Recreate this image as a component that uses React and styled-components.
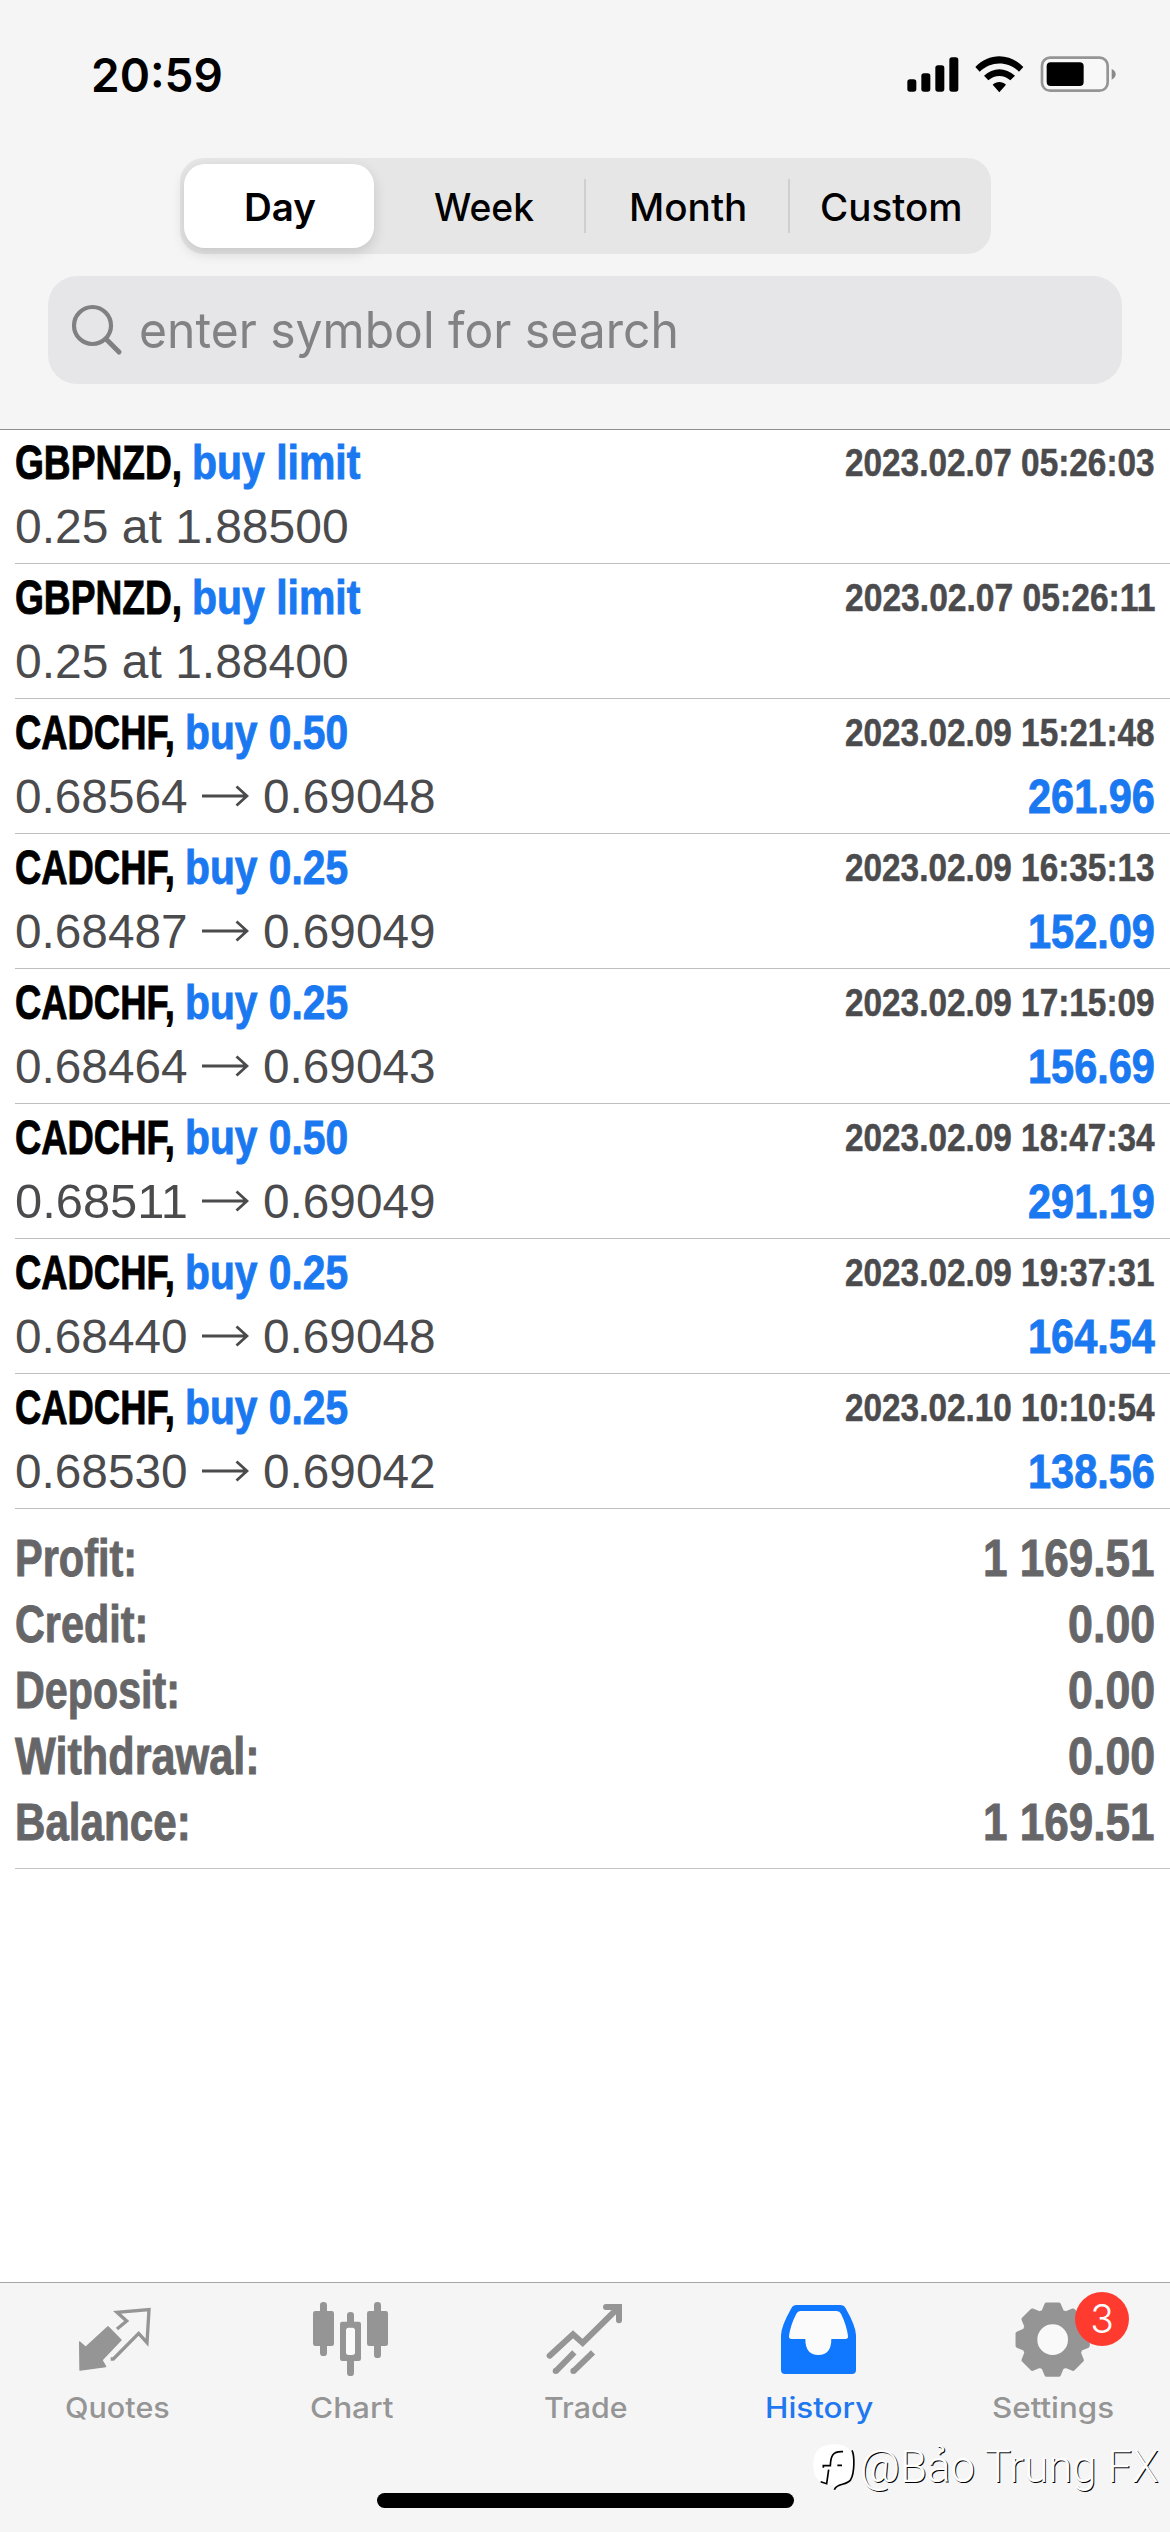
import React, { useLayoutEffect, useRef, useState } from 'react'
import styled, { createGlobalStyle } from 'styled-components';

const GlobalStyle = createGlobalStyle`
    body {
        margin: 0;
        background: #fff;
        font-family: "Inter", sans-serif;
        color: #000;
    }
    * {
        box-sizing: border-box;
    }
    svg {
        display: block;
        flex: none;
    }
`;

const Screen = styled.div`
    width: 1170px;
    height: 2532px;
    display: flex;
    flex-direction: column;
    background: #fff;
    overflow: hidden;
`;

const Header = styled.header`
    height: 430px;
    flex: none;
    background: #f5f5f5;
    border-bottom: 1px solid #8e8e90;
`;

const StatusBar = styled.div`
    height: 158px;
    padding: 0 54px 9px 91px;
    display: flex;
    align-items: center;
    justify-content: space-between;
`;

const Clock = styled.div`
    font-size: 47px;
    font-weight: 600;
    line-height: 60px;
`;

const StatusIcons = styled.div`
    display: flex;
    align-items: center;
    gap: 16px;
`;

const Segments = styled.div`
    width: 811px;
    height: 96px;
    margin: 0 0 0 180px;
    padding: 6px 0 6px 4px;
    border-radius: 24px;
    background: #e6e6e6;
    display: flex;
    align-items: center;
`;

const Segment = styled.button`
    width: ${p => p.$width}px;
    height: 84px;
    padding: 1px 0 0 ${p => p.$shift || 0}px;
    border: 0;
    border-radius: 21px;
    display: flex;
    align-items: center;
    justify-content: center;
    font-family: inherit;
    font-size: 38px;
    font-weight: ${p => p.$active ? 600 : 500};
    color: #000;
    background: ${p => p.$active ? '#fff' : 'transparent'};
    box-shadow: ${p => p.$active ? '0 5px 14px rgba(0,0,0,.14)' : 'none'};
`;

const SegmentLine = styled.div`
    width: 2px;
    height: 54px;
    background: ${p => p.$hidden ? 'transparent' : '#cfcfd1'};
`;

const Search = styled.div`
    width: 1074px;
    height: 108px;
    margin: 22px 0 0 48px;
    padding-left: 23px;
    border-radius: 29px;
    background: #e6e6e8;
    display: flex;
    align-items: center;
    gap: 16px;
    font-size: 50px;
    line-height: 60px;
    color: #828284;
`;

const List = styled.div`
    padding-left: 15px;
    font-family: "Liberation Sans", Arial, sans-serif;
`;

const Row = styled.div`
    height: 135px;
    padding: 0 15px 5px 0;
    border-bottom: 1px solid #bfbfc1;
    display: flex;
    flex-direction: column;
    justify-content: flex-end;
    gap: 4px;

    &:first-child {
        height: 134px;
    }
`;

const Line = styled.div`
    height: ${p => p.$height}px;
    line-height: ${p => p.$height}px;
    flex: none;
    display: flex;
    align-items: center;
    justify-content: space-between;
`;

const Group = styled.div`
    display: flex;
    align-items: center;
    gap: ${p => p.$gap || 0}px;
`;

const Symbol = styled.div`
    font-size: 48px;
    font-weight: 700;
    color: #000;
    -webkit-text-stroke: 0.9px currentColor;
`;

const Kind = styled(Symbol)`
    color: #1a78f0;
`;

const Stamp = styled.div`
    font-size: 38.5px;
    font-weight: 700;
    color: #4b4b4d;
    -webkit-text-stroke: 0.5px currentColor;
`;

const Price = styled.div`
    font-size: 48px;
    color: #4b4b4d;
`;

const Summary = styled.div`
    height: 360px;
    padding: 17px 15px 0 0;
    border-bottom: 1px solid #c4c4c6;
`;

const Total = styled.div`
    font-size: 51px;
    font-weight: 700;
    color: #666668;
    -webkit-text-stroke: 0.9px currentColor;
`;

const TabBar = styled.nav`
    position: relative;
    height: 250px;
    margin-top: auto;
    flex: none;
    background: #f5f5f5;
    border-top: 1px solid #a6a6a8;
    display: flex;
`;

const Tab = styled.div`
    position: relative;
    width: 234px;
    padding-top: 14px;
    display: flex;
    flex-direction: column;
    align-items: center;
    font-size: 28.5px;
    font-weight: 500;
    line-height: 36px;
    color: ${p => p.$active ? '#1f78f0' : '#959595'};
`;

const TabLabel = styled.div`
    margin-top: 8px;
`;

const Badge = styled.div`
    position: absolute;
    left: 139px;
    top: 9px;
    width: 54px;
    height: 54px;
    border-radius: 50%;
    background: #ff3b30;
    color: #fff;
    font-size: 39px;
    font-weight: 300;
    line-height: 54px;
    text-align: center;
`;

const HomeBar = styled.div`
    position: absolute;
    left: 377px;
    top: 210px;
    width: 417px;
    height: 15px;
    border-radius: 8px;
    background: #000;
`;

const Watermark = styled.div`
    position: absolute;
    left: 812px;
    top: 160px;
    height: 54px;
    display: flex;
    align-items: flex-start;
    gap: 4px;
    font-family: Roboto, sans-serif;
    font-size: 45px;
    font-weight: 300;
    line-height: 48px;
    color: #fff;
    text-shadow: 1px 1px 0 #000;
`;

const FitBox = styled.div`
    width: ${p => p.$width}px;
    white-space: nowrap;
`;

const FitText = styled.span`
    display: inline-block;
    transform-origin: left center;
`;

// squeezes a text so that it fills the given width, for the condensed look
function Fit({ width, children }) {
    const ref = useRef(null);
    const [scale, setScale] = useState(1);

    useLayoutEffect(() => {
        setScale(width / ref.current.offsetWidth);
    }, [width, children]);

    return (
        <FitBox $width={width}>
            <FitText ref={ref} style={{ transform: `scaleX(${scale})` }}>{children}</FitText>
        </FitBox>
    );
}

const symbolWidth = { 'GBPNZD,': 167, 'CADCHF,': 160 };
const kindWidth = { 'buy limit': 168, 'buy 0.50': 163, 'buy 0.25': 163 };

const orders = [
    { symbol: 'GBPNZD,', kind: 'buy limit', time: '2023.02.07 05:26:03', pending: '0.25 at 1.88500' },
    { symbol: 'GBPNZD,', kind: 'buy limit', time: '2023.02.07 05:26:11', pending: '0.25 at 1.88400' },
    { symbol: 'CADCHF,', kind: 'buy 0.50', time: '2023.02.09 15:21:48', open: '0.68564', close: '0.69048', profit: '261.96' },
    { symbol: 'CADCHF,', kind: 'buy 0.25', time: '2023.02.09 16:35:13', open: '0.68487', close: '0.69049', profit: '152.09' },
    { symbol: 'CADCHF,', kind: 'buy 0.25', time: '2023.02.09 17:15:09', open: '0.68464', close: '0.69043', profit: '156.69' },
    { symbol: 'CADCHF,', kind: 'buy 0.50', time: '2023.02.09 18:47:34', open: '0.68511', close: '0.69049', profit: '291.19' },
    { symbol: 'CADCHF,', kind: 'buy 0.25', time: '2023.02.09 19:37:31', open: '0.68440', close: '0.69048', profit: '164.54' },
    { symbol: 'CADCHF,', kind: 'buy 0.25', time: '2023.02.10 10:10:54', open: '0.68530', close: '0.69042', profit: '138.56' },
];

const totals = [
    { label: 'Profit:', labelWidth: 122, value: '1 169.51', valueWidth: 172 },
    { label: 'Credit:', labelWidth: 133, value: '0.00', valueWidth: 87 },
    { label: 'Deposit:', labelWidth: 165, value: '0.00', valueWidth: 87 },
    { label: 'Withdrawal:', labelWidth: 245, value: '0.00', valueWidth: 87 },
    { label: 'Balance:', labelWidth: 176, value: '1 169.51', valueWidth: 172 },
];

function SignalIcon() {
    return (
        <svg width="52" height="36" viewBox="80 50 156 108">
            <rect x="81" y="117" width="27" height="37" rx="8" />
            <rect x="123" y="99" width="27" height="55" rx="8" />
            <rect x="165" y="75" width="27" height="79" rx="8" />
            <rect x="207" y="51" width="27" height="103" rx="8" />
        </svg>
    );
}

function WifiIcon() {
    return (
        <svg width="49" height="38" viewBox="284 44 147 114">
            <path d="M285 77 C325 34 389 34 429 77 L416 91 C382 58 332 58 298 91 Z" />
            <path d="M311 103 C338 77 376 77 404 103 L390 117 C370 100 344 100 324 117 Z" />
            <path d="M337 130 C348 119 366 119 377 130 L357 153 Z" />
        </svg>
    );
}

function BatteryIcon() {
    return (
        <svg width="76" height="37" viewBox="478 47 228 111">
            <rect x="484" y="52" width="197" height="99" rx="24" fill="#f8f8f8" stroke="#959595" strokeWidth="8" />
            <rect x="498" y="66" width="111" height="71" rx="12" />
            <path d="M693 86 Q705 92 705 102 Q705 112 693 118 Z" fill="#8a8a8a" />
        </svg>
    );
}

function SearchIcon() {
    return (
        <svg width="52" height="52" viewBox="0 0 52 52" fill="none" stroke="#808082" strokeLinecap="round">
            <circle cx="21.5" cy="21.5" r="18.5" strokeWidth="4.2" />
            <path d="M35 35 L48 48" strokeWidth="5" />
        </svg>
    );
}

function ArrowIcon() {
    return (
        <svg width="47" height="24" viewBox="0 0 47 24" fill="none" stroke="#4b4b4d" strokeWidth="2.8">
            <path d="M0 11 H45 M34.5 1.5 L45 11 L34.5 20.5" />
        </svg>
    );
}

function QuotesIcon() {
    return (
        <svg width="88" height="85" viewBox="99 81 264 255">
            <path d="M119 216 L137 232 L204 170 L243 210 L186 270 L197 290 L120 300 Z" fill="#959595" stroke="#959595" strokeWidth="4" strokeLinejoin="round" />
            <path d="M231 177 L260 153 L231 127 L327 119 L321 218 L296 190 L220 267 H212" fill="none" stroke="#959595" strokeWidth="10" />
        </svg>
    );
}

function ChartIcon() {
    return (
        <svg width="88" height="85" viewBox="801 81 264 255" fill="#959595">
            <rect x="840" y="96" width="21" height="162" rx="10" />
            <rect x="819" y="123" width="63" height="105" rx="7" />
            <rect x="1002" y="96" width="21" height="168" rx="10" />
            <rect x="981" y="123" width="63" height="105" rx="7" />
            <rect x="921" y="126" width="21" height="192" rx="10" />
            <rect x="900" y="155" width="63" height="118" rx="7" />
            <rect x="918" y="173" width="27" height="82" rx="8" fill="#fafafa" />
        </svg>
    );
}

function TradeIcon() {
    return (
        <svg width="88" height="85" viewBox="123 81 264 255" fill="none" stroke="#959595" strokeWidth="18">
            <path d="M149 257 L219 193 L248 219 L354 114" strokeLinecap="round" />
            <path d="M318 111 H357 V151" strokeLinecap="round" />
            <path d="M167 304 L223 247 M220 304 L279 247" />
            <circle cx="167" cy="303" r="9" fill="#959595" stroke="none" />
            <circle cx="220" cy="303" r="9" fill="#959595" stroke="none" />
        </svg>
    );
}

function HistoryIcon() {
    return (
        <svg width="88" height="85" viewBox="825 81 264 255">
            <path d="M890 105 H1020 Q1032 105 1037 115 Q1068 170 1068 196 V300 Q1068 312 1056 312 H855 Q843 312 843 300 V196 Q843 170 874 115 Q879 105 890 105 Z" fill="#0f78ff" />
            <path d="M901 123 H1010 Q1019 123 1023 131 Q1040 166 1044 198 Q1045 207 1036 207 H994 Q994 255 955 255 Q916 255 916 207 H875 Q866 207 867 198 Q871 166 889 131 Q893 123 901 123 Z" fill="#fbfbfb" />
        </svg>
    );
}

function gearPoints(cx, cy) {
    const points = [];
    for (let i = 0; i < 8; i++) {
        [[-18.5, 88], [-10, 107], [10, 107], [18.5, 88]].forEach(([turn, r]) => {
            const a = (i * 45 + turn) * Math.PI / 180;
            points.push(`${(cx + r * Math.sin(a)).toFixed(1)},${(cy - r * Math.cos(a)).toFixed(1)}`);
        });
    }
    return points.join(' ');
}

function SettingsIcon() {
    return (
        <svg width="88" height="85" viewBox="657 81 264 255">
            <polygon points={gearPoints(788, 209)} fill="#959595" stroke="#959595" strokeWidth="12" strokeLinejoin="round" />
            <circle cx="788" cy="209" r="46" fill="#f9f9f9" />
        </svg>
    );
}

function WatermarkLogo() {
    return (
        <svg width="44" height="50" viewBox="64 528 132 150">
            <path d="M130 532 C172 532 190 552 190 592 C190 630 178 648 150 652 C140 654 134 660 130 668 L128 654 C88 654 68 636 68 594 C68 550 90 532 130 532 Z" fill="#fff" />
            <path d="M184 550 C192 566 192 618 180 638 C168 656 138 648 131 668" fill="none" stroke="#000" strokeWidth="5" />
            <path d="M157 554 C126 552 120 566 119 596 H98 V602 M140 595 H154 M114 608 L108 650 L90 644" fill="none" stroke="#000" strokeWidth="5" />
        </svg>
    );
}

const tabs = [
    { label: 'Quotes', width: 105, icon: QuotesIcon },
    { label: 'Chart', width: 83, icon: ChartIcon },
    { label: 'Trade', width: 83, icon: TradeIcon },
    { label: 'History', width: 108, icon: HistoryIcon, active: true },
    { label: 'Settings', width: 122, icon: SettingsIcon, badge: 3 },
];

function Order({ order }) {
    return (
        <Row>
            <Line $height={56}>
                <Group $gap={10}>
                    <Symbol><Fit width={symbolWidth[order.symbol]}>{order.symbol}</Fit></Symbol>
                    <Kind><Fit width={kindWidth[order.kind]}>{order.kind}</Fit></Kind>
                </Group>
                <Stamp><Fit width={310}>{order.time}</Fit></Stamp>
            </Line>
            <Line $height={63}>
                {order.pending ?
                    <Price><Fit width={334}>{order.pending}</Fit></Price>
                    :
                    <Group $gap={14}>
                        <Price><Fit width={173}>{order.open}</Fit></Price>
                        <ArrowIcon />
                        <Price><Fit width={173}>{order.close}</Fit></Price>
                    </Group>
                }
                {order.profit && <Kind><Fit width={127}>{order.profit}</Fit></Kind>}
            </Line>
        </Row>
    );
}

function App() {
    return (
        <Screen>
            <GlobalStyle />
            <Header>
                <StatusBar>
                    <Clock><Fit width={132}>20:59</Fit></Clock>
                    <StatusIcons>
                        <SignalIcon />
                        <WifiIcon />
                        <BatteryIcon />
                    </StatusIcons>
                </StatusBar>
                <Segments>
                    <Segment $width={190} $active><Fit width={72}>Day</Fit></Segment>
                    <SegmentLine $hidden />
                    <Segment $width={208} $shift={7}><Fit width={100}>Week</Fit></Segment>
                    <SegmentLine />
                    <Segment $width={202}><Fit width={118}>Month</Fit></Segment>
                    <SegmentLine />
                    <Segment $width={201}><Fit width={142}>Custom</Fit></Segment>
                </Segments>
                <Search>
                    <SearchIcon />
                    <Fit width={540}>enter symbol for search</Fit>
                </Search>
            </Header>
            <List>
                {orders.map(order => <Order key={order.time} order={order} />)}
                <Summary>
                    {totals.map(total => (
                        <Line key={total.label} $height={66}>
                            <Total><Fit width={total.labelWidth}>{total.label}</Fit></Total>
                            <Total><Fit width={total.valueWidth}>{total.value}</Fit></Total>
                        </Line>
                    ))}
                </Summary>
            </List>
            <TabBar>
                {tabs.map(({ label, width, icon: Icon, active, badge }) => (
                    <Tab key={label} $active={active}>
                        <Icon />
                        <TabLabel><Fit width={width}>{label}</Fit></TabLabel>
                        {badge && <Badge>{badge}</Badge>}
                    </Tab>
                ))}
                <HomeBar />
                <Watermark>
                    <WatermarkLogo />
                    <Fit width={299}>@Bảo Trung FX</Fit>
                </Watermark>
            </TabBar>
        </Screen>
    )
}

export default App;
